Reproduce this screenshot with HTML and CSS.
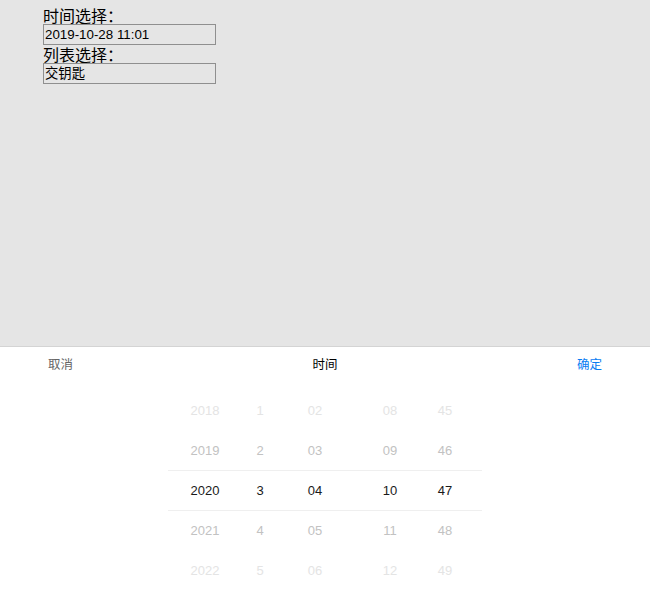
FILE: index.html
```html
<!DOCTYPE html>
<html lang="zh">
<head>
<meta charset="utf-8">
<title>选择器</title>
<link rel="stylesheet" href="styles.css">
</head>
<body>
<div class="page">
  <div class="form">
    <div class="label">时间选择：</div>
    <div class="field">2019-10-28 11:01</div>
    <div class="label">列表选择：</div>
    <div class="field">交钥匙</div>
  </div>
  <div class="sheet">
    <div class="sheet-head">
      <span class="cancel">取消</span>
      <span class="title">时间</span>
      <span class="ok">确定</span>
    </div>
    <div class="picker">
      <div class="band"></div>
      <div class="col">
        <div class="item far">2018</div>
        <div class="item near">2019</div>
        <div class="item sel">2020</div>
        <div class="item near">2021</div>
        <div class="item far">2022</div>
      </div>
      <div class="col">
        <div class="item far">1</div>
        <div class="item near">2</div>
        <div class="item sel">3</div>
        <div class="item near">4</div>
        <div class="item far">5</div>
      </div>
      <div class="col">
        <div class="item far">02</div>
        <div class="item near">03</div>
        <div class="item sel">04</div>
        <div class="item near">05</div>
        <div class="item far">06</div>
      </div>
      <div class="col gap-left">
        <div class="item far">08</div>
        <div class="item near">09</div>
        <div class="item sel">10</div>
        <div class="item near">11</div>
        <div class="item far">12</div>
      </div>
      <div class="col">
        <div class="item far">45</div>
        <div class="item near">46</div>
        <div class="item sel">47</div>
        <div class="item near">48</div>
        <div class="item far">49</div>
      </div>
    </div>
  </div>
</div>
</body>
</html>
```
FILE: styles.css
```css
html, body {
  margin: 0;
  padding: 0;
}
body {
  background: #e5e5e5;
  font-family: "Noto Sans CJK SC", sans-serif;
}
.page {
  height: 600px;
  display: flex;
  flex-direction: column;
  overflow: hidden;
}
.form {
  flex: 1;
  padding: 6px 0 0 43px;
  border-bottom: 1px solid #d4d4d4;
}
.label {
  font-size: 16px;
  line-height: 18px;
  height: 18px;
  color: #000;
}
.field {
  box-sizing: border-box;
  width: 173px;
  height: 21px;
  border: 1px solid #8f8f8f;
  padding: 0 0 0 1px;
  font-family: "Liberation Sans", "Noto Sans CJK SC", sans-serif;
  font-size: 13.33px;
  line-height: 19px;
  color: #000;
}
.sheet {
  height: 253px;
  background: #fff;
}
.sheet-head {
  height: 33px;
  display: flex;
  align-items: center;
  justify-content: space-between;
  padding: 0 48px;
  font-size: 12.5px;
}
.cancel { color: #666; }
.title { color: #000; }
.ok { color: #0a7cf2; }
.picker {
  position: relative;
  margin-top: 10px;
  display: flex;
  justify-content: center;
  gap: 15px;
  font-family: "Liberation Sans", sans-serif;
  font-size: 13px;
}
.band {
  position: absolute;
  left: 168px;
  width: 314px;
  top: 80px;
  height: 41px;
  box-sizing: border-box;
  border-top: 1px solid #efefef;
  border-bottom: 1px solid #efefef;
}
.col {
  width: 40px;
  display: flex;
  flex-direction: column;
}
.col.gap-left {
  margin-left: 20px;
}
.item {
  box-sizing: border-box;
  height: 40px;
  padding-top: 2px;
  line-height: 38px;
  text-align: center;
}
.far { color: #e4e4e4; }
.near { color: #c2c2c2; }
.sel { color: #1a1a1a; }
```
